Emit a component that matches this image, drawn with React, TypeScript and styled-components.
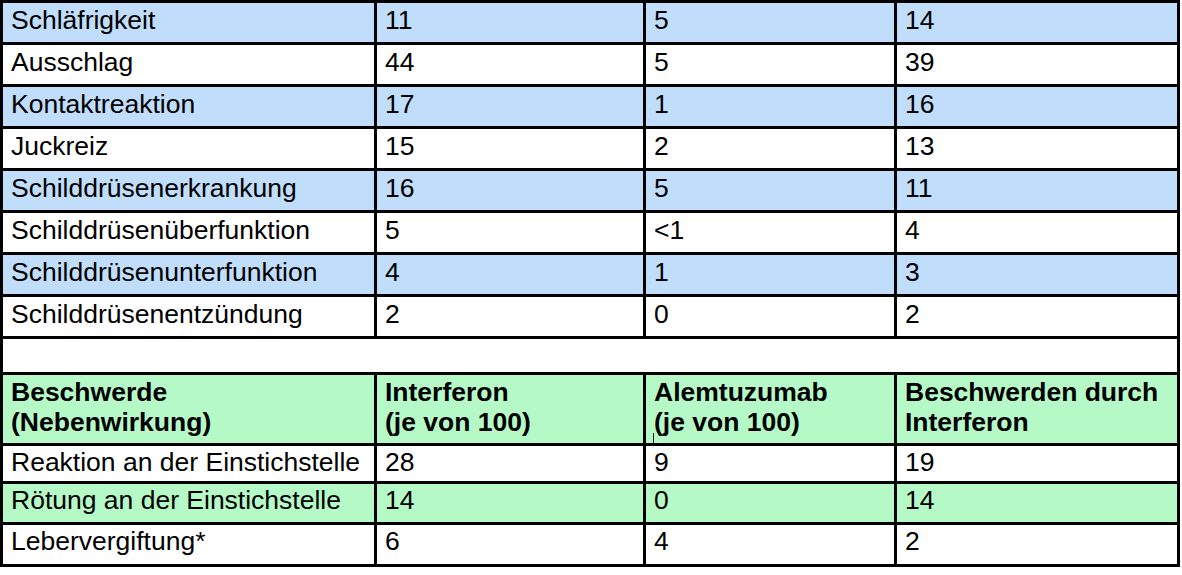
import React from "react";
import styled, { createGlobalStyle } from "styled-components";

// TYPES
type Tone = "blue" | "green" | "white";

interface Row {
  label: string;
  values: [string, string, string];
  tone: Tone;
}

const GlobalStyle = createGlobalStyle`
html, body {
  margin: 0;
  padding: 0;
  background: #ffffff;
}
body {
  font-family: "Liberation Sans", Arial, sans-serif;
  color: #000000;
}
`;

const TONES: Record<Tone, string> = {
  blue: "#c0ddfb",
  green: "#b5f9c7",
  white: "#ffffff",
};

const TableStyled = styled.table`
border-collapse: separate;
border-spacing: 0;
border-top: 3px solid #000;
border-left: 3px solid #000;
table-layout: fixed;
width: 1180px;
font-size: 26.5px;
line-height: 30px;
`;

const RowStyled = styled.tr<{ $tone: Tone }>`
background: ${(p) => TONES[p.$tone]};
`;

const CellStyled = styled.td<{ $h: number; $top: number }>`
height: ${(p) => p.$h}px;
padding: ${(p) => p.$top}px 8px 0 8px;
box-sizing: border-box;
vertical-align: top;
border-right: 3px solid #000;
border-bottom: 3px solid #000;
white-space: nowrap;
overflow: hidden;
`;

const HeadCellStyled = styled(CellStyled).attrs({ as: "th" })`
font-weight: bold;
text-align: left;
`;

const EmptyCellStyled = styled.td`
height: 33px;
padding: 0;
border-right: 3px solid #000;
border-bottom: 3px solid #000;
`;

// text cursor left in the Alemtuzumab cell
const Caret = styled.span`
position: relative;
display: inline-block;
width: 0;
&::before {
  content: "";
  position: absolute;
  left: -1px;
  top: 2px;
  width: 1px;
  height: 25px;
  background: #222;
}
`;

const topRows: Row[] = [
  { label: "Schläfrigkeit", values: ["11", "5", "14"], tone: "blue" },
  { label: "Ausschlag", values: ["44", "5", "39"], tone: "white" },
  { label: "Kontaktreaktion", values: ["17", "1", "16"], tone: "blue" },
  { label: "Juckreiz", values: ["15", "2", "13"], tone: "white" },
  { label: "Schilddrüsenerkrankung", values: ["16", "5", "11"], tone: "blue" },
  { label: "Schilddrüsenüberfunktion", values: ["5", "<1", "4"], tone: "white" },
  { label: "Schilddrüsenunterfunktion", values: ["4", "1", "3"], tone: "blue" },
  { label: "Schilddrüsenentzündung", values: ["2", "0", "2"], tone: "white" },
];

const bottomRows: (Row & { h: number })[] = [
  { label: "Reaktion an der Einstichstelle", values: ["28", "9", "19"], tone: "white", h: 38 },
  { label: "Rötung an der Einstichstelle", values: ["14", "0", "14"], tone: "green", h: 41 },
  { label: "Lebervergiftung*", values: ["6", "4", "2"], tone: "white", h: 42 },
];

const DataRow: React.FC<{ row: Row; h: number; top: number }> = ({ row, h, top }) => (
  <RowStyled $tone={row.tone}>
    <CellStyled $h={h} $top={top}>{row.label}</CellStyled>
    {row.values.map((v, i) => (
      <CellStyled key={i} $h={h} $top={top}>{v}</CellStyled>
    ))}
  </RowStyled>
);

const App: React.FC = () => {
  return (
    <>
      <GlobalStyle />
      <TableStyled>
        <colgroup>
          <col style={{ width: 374 }} />
          <col style={{ width: 269 }} />
          <col style={{ width: 251 }} />
          <col style={{ width: 283 }} />
        </colgroup>
        <tbody>
          {topRows.map((r) => (
            <DataRow key={r.label} row={r} h={42} top={2} />
          ))}

          <tr>
            <EmptyCellStyled colSpan={4} />
          </tr>

          <RowStyled $tone="green">
            <HeadCellStyled $h={71} $top={2}>Beschwerde<br />(Nebenwirkung)</HeadCellStyled>
            <HeadCellStyled $h={71} $top={2}>Interferon<br />(je von 100)</HeadCellStyled>
            <HeadCellStyled $h={71} $top={2}>Alemtuzumab<br /><Caret />(je von 100)</HeadCellStyled>
            <HeadCellStyled $h={71} $top={2}>Beschwerden durch<br />Interferon</HeadCellStyled>
          </RowStyled>

          {bottomRows.map((r) => (
            <DataRow key={r.label} row={r} h={r.h} top={1} />
          ))}
        </tbody>
      </TableStyled>
    </>
  );
};

export default App;
